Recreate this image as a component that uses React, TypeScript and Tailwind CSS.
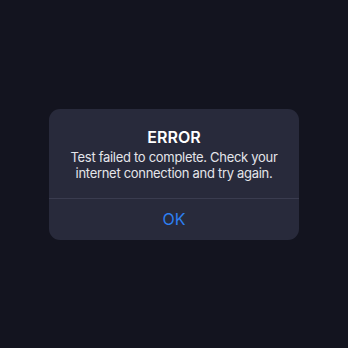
import React from 'react';

const App: React.FC = () => {
  return (
    <div className="w-[348px] h-[348px] bg-[#13141f] flex items-center justify-center font-['Inter',sans-serif]">
      {/* Alert dialog */}
      <div className="w-[250px] rounded-[11px] bg-[#282a3b] overflow-hidden">
        <div className="px-2 pt-[18px] pb-[17px] text-center">
          <h2 className="text-[16px] leading-5 font-semibold text-white">ERROR</h2>
          <p className="mt-[2px] text-[13px] leading-4 tracking-[-0.3px] text-[#e4e5ea]">
            Test failed to complete. Check your internet connection and try again.
          </p>
        </div>
        <div className="h-px bg-[#3a3c4f]" />
        <button className="w-full h-[41px] flex items-center justify-center text-[16px] text-[#2d7ff1]">
          OK
        </button>
      </div>
    </div>
  );
};

export default App;
